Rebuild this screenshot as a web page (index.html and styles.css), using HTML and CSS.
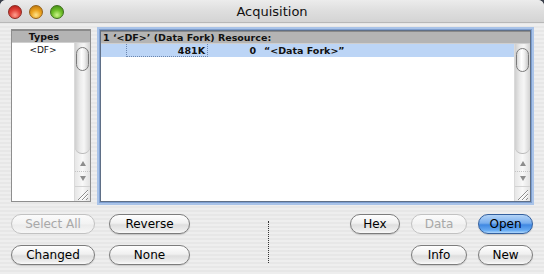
FILE: index.html
```html
<!DOCTYPE html>
<html>
<head>
<meta charset="utf-8">
<link rel="stylesheet" href="styles.css">
</head>
<body>
<div class="window">
  <div class="titlebar">
    <div class="lights">
      <span class="light red"></span>
      <span class="light yellow"></span>
      <span class="light green"></span>
    </div>
    <div class="title">Acquisition</div>
    <div></div>
  </div>
  <div class="content">
    <div class="panes">
      <div class="pane types">
        <div class="hdr hdr-center">Types</div>
        <div class="pane-body">
          <div class="list">
            <div class="row row-center">&lt;DF&gt;</div>
          </div>
          <div class="scroll">
            <div class="track"><div class="thumb"></div></div>
            <div class="arrows">
              <div class="arrow"><span class="tri up"></span></div>
              <div class="arrow"><span class="tri down"></span></div>
            </div>
            <div class="grip">
              <svg width="15" height="14" viewBox="0 0 15 14"><path d="M3 13L13 3M7 13L13 7M11 13L13 11" stroke="#8c8c8c" stroke-width="1" fill="none"/><path d="M4 13L13 4M8 13L13 8" stroke="#fff" stroke-width="1" fill="none"/></svg>
            </div>
          </div>
        </div>
      </div>
      <div class="pane resources">
        <div class="hdr">1 ‘&lt;DF&gt;’ (Data Fork) Resource:</div>
        <div class="pane-body">
          <div class="list">
            <div class="row sel">
              <span class="c-id"></span>
              <span class="c-size">481K</span>
              <span class="c-num">0</span>
              <span class="c-name">“&lt;Data Fork&gt;”</span>
            </div>
          </div>
          <div class="scroll">
            <div class="track"><div class="thumb"></div></div>
            <div class="arrows">
              <div class="arrow"><span class="tri up"></span></div>
              <div class="arrow"><span class="tri down"></span></div>
            </div>
            <div class="grip">
              <svg width="15" height="14" viewBox="0 0 15 14"><path d="M3 13L13 3M7 13L13 7M11 13L13 11" stroke="#8c8c8c" stroke-width="1" fill="none"/><path d="M4 13L13 4M8 13L13 8" stroke="#fff" stroke-width="1" fill="none"/></svg>
            </div>
          </div>
        </div>
      </div>
    </div>
    <div class="buttons">
      <div class="left-btns">
        <button class="btn disabled">Select All</button>
        <button class="btn">Reverse</button>
        <button class="btn">Changed</button>
        <button class="btn">None</button>
      </div>
      <div class="divider"></div>
      <div class="right-btns">
        <button class="btn">Hex</button>
        <button class="btn disabled">Data</button>
        <button class="btn default">Open</button>
        <span></span>
        <button class="btn">Info</button>
        <button class="btn">New</button>
      </div>
    </div>
  </div>
</div>
</body>
</html>
```
FILE: styles.css
```css
html, body {
  margin: 0;
  padding: 0;
}
body {
  width: 544px;
  height: 274px;
  overflow: hidden;
  font-family: "DejaVu Sans", sans-serif;
  background: #3a3f4a;
}
.window {
  width: 544px;
  height: 274px;
  display: flex;
  flex-direction: column;
  background: repeating-linear-gradient(#eeeeee 0 2px, #e7e7e7 2px 4px);
  border-radius: 6px 6px 0 0;
  overflow: hidden;
}
.titlebar {
  height: 22px;
  flex: none;
  display: grid;
  grid-template-columns: 1fr auto 1fr;
  align-items: center;
  background: linear-gradient(#ececec, #dedede 50%, #d4d4d4);
  border-bottom: 1px solid #b8b8b8;
}
.lights {
  display: flex;
  gap: 7px;
  padding-left: 8px;
  padding-top: 1px;
}
.light {
  width: 14px;
  height: 14px;
  border-radius: 50%;
  box-sizing: border-box;
}
.red {
  background: radial-gradient(circle at 50% 75%, #ffa090 0, #e4463c 45%, #a81410 100%);
  border: 1px solid #8a2a22;
}
.yellow {
  background: radial-gradient(circle at 50% 75%, #ffe48a 0, #eca420 45%, #b06a08 100%);
  border: 1px solid #94621a;
}
.green {
  background: radial-gradient(circle at 50% 75%, #ccf48a 0, #70c02a 45%, #3a8010 100%);
  border: 1px solid #3d6e1c;
}
.title {
  font-size: 13px;
  color: #111;
  padding-top: 1px;
}
.content {
  flex: 1;
  padding: 6px 13px 0 11px;
  display: flex;
  flex-direction: column;
}
.panes {
  display: flex;
  height: 173px;
  gap: 9px;
}
.pane {
  display: flex;
  flex-direction: column;
  background: #fff;
  box-sizing: border-box;
}
.types {
  width: 80px;
  border: 1px solid #8e8e8e;
}
.resources {
  flex: 1;
  margin-top: 1px;
  height: 172px;
  border: 1px solid #5f6f86;
  box-shadow: 0 0 0 1px #7e9fd0, 0 0 0 3px #a9c3e8;
}
.hdr {
  height: 13px;
  flex: none;
  box-sizing: border-box;
  background: #b4b4b4;
  border-top: 1px solid #8a8a8a;
  border-bottom: 1px solid #cfcfcf;
  font-size: 9.5px;
  font-weight: bold;
  line-height: 11px;
  color: #111;
  padding-left: 2px;
  white-space: nowrap;
}
.hdr-center {
  text-align: center;
  padding-left: 0;
  padding-right: 14px;
}
.pane-body {
  flex: 1;
  display: flex;
  min-height: 0;
}
.list {
  flex: 1;
}
.row {
  height: 13px;
  font-size: 9.5px;
  line-height: 13px;
  color: #111;
  white-space: nowrap;
}
.row-center {
  text-align: center;
  font-weight: normal;
  font-size: 9px;
  line-height: 12px;
  margin-top: 1px;
}
.sel {
  background: #bcd5f6;
  display: flex;
  font-weight: bold;
}
.c-id {
  width: 25px;
  flex: none;
  border-right: 1px dotted #6a86b0;
}
.c-size {
  width: 81px;
  flex: none;
  text-align: right;
  padding-right: 2px;
  box-sizing: border-box;
  border-right: 1px dotted #6a86b0;
  border-bottom: 1px dotted #6a86b0;
}
.c-num {
  width: 48px;
  flex: none;
  text-align: right;
}
.c-name {
  padding-left: 8px;
}
.scroll {
  width: 15px;
  flex: none;
  display: flex;
  flex-direction: column;
  border-left: 1px solid #dadada;
  background: linear-gradient(90deg, #e6e6e6, #f8f8f8 50%, #e2e2e2);
}
.track {
  flex: 1;
  position: relative;
  border-radius: 0 0 7px 7px;
  background: linear-gradient(90deg, #cfcfcf, #ececec 35%, #f6f6f6 60%, #d2d2d2);
  border-bottom: 1px solid #bbb;
  margin-bottom: 2px;
}
.thumb {
  position: absolute;
  left: 1px;
  right: 1px;
  top: 4px;
  height: 24px;
  box-sizing: border-box;
  border-radius: 7px;
  border: 1px solid #7a7a7a;
  background: linear-gradient(90deg, #d8d8d8, #ffffff 40%, #f2f2f2 65%, #c8c8c8);
}
.arrows {
  height: 30px;
  flex: none;
  display: flex;
  flex-direction: column;
}
.arrow {
  flex: 1;
  display: flex;
  align-items: center;
  justify-content: center;
}
.arrow + .arrow {
  border-top: 1px dotted #c4c4c4;
}
.tri {
  width: 0;
  height: 0;
  border-left: 3px solid transparent;
  border-right: 3px solid transparent;
}
.up {
  border-bottom: 5px solid #8d8d8d;
}
.down {
  border-top: 5px solid #8d8d8d;
}
.grip {
  height: 14px;
  flex: none;
  display: flex;
  border-top: 1px solid #d2d2d2;
}
.buttons {
  display: flex;
  margin-top: 12px;
}
.left-btns {
  display: grid;
  grid-template-columns: 84px 81px;
  column-gap: 14px;
  row-gap: 11px;
}
.divider {
  width: 0;
  height: 42px;
  margin-top: 7px;
  margin-left: 78px;
  border-left: 1px dotted #333;
}
.right-btns {
  margin-left: auto;
  margin-right: -2px;
  display: grid;
  grid-template-columns: 50px 56px 55px;
  column-gap: 11px;
  row-gap: 11px;
}
.btn {
  height: 20px;
  padding: 0;
  margin: 0;
  box-sizing: border-box;
  border: 1px solid #7c7c7c;
  border-radius: 10px;
  background: linear-gradient(#fefefe, #f0f0f0 45%, #dedede 55%, #ececec 85%, #fafafa);
  font-family: "DejaVu Sans", sans-serif;
  font-size: 12px;
  line-height: 18px;
  color: #000;
  box-shadow: 0 1px 1px rgba(0,0,0,0.15);
}
.btn.disabled {
  color: #a8a8a8;
  border-color: #c2c2c2;
  background: linear-gradient(#fbfbfb, #f2f2f2 50%, #ebebeb 55%, #f6f6f6);
  box-shadow: none;
}
.btn.default {
  border-color: #34609e;
  background: linear-gradient(#b4d4f7, #78aeee 45%, #4088e2 55%, #66aaf2 85%, #b0d8fc);
  color: #000;
}
```
